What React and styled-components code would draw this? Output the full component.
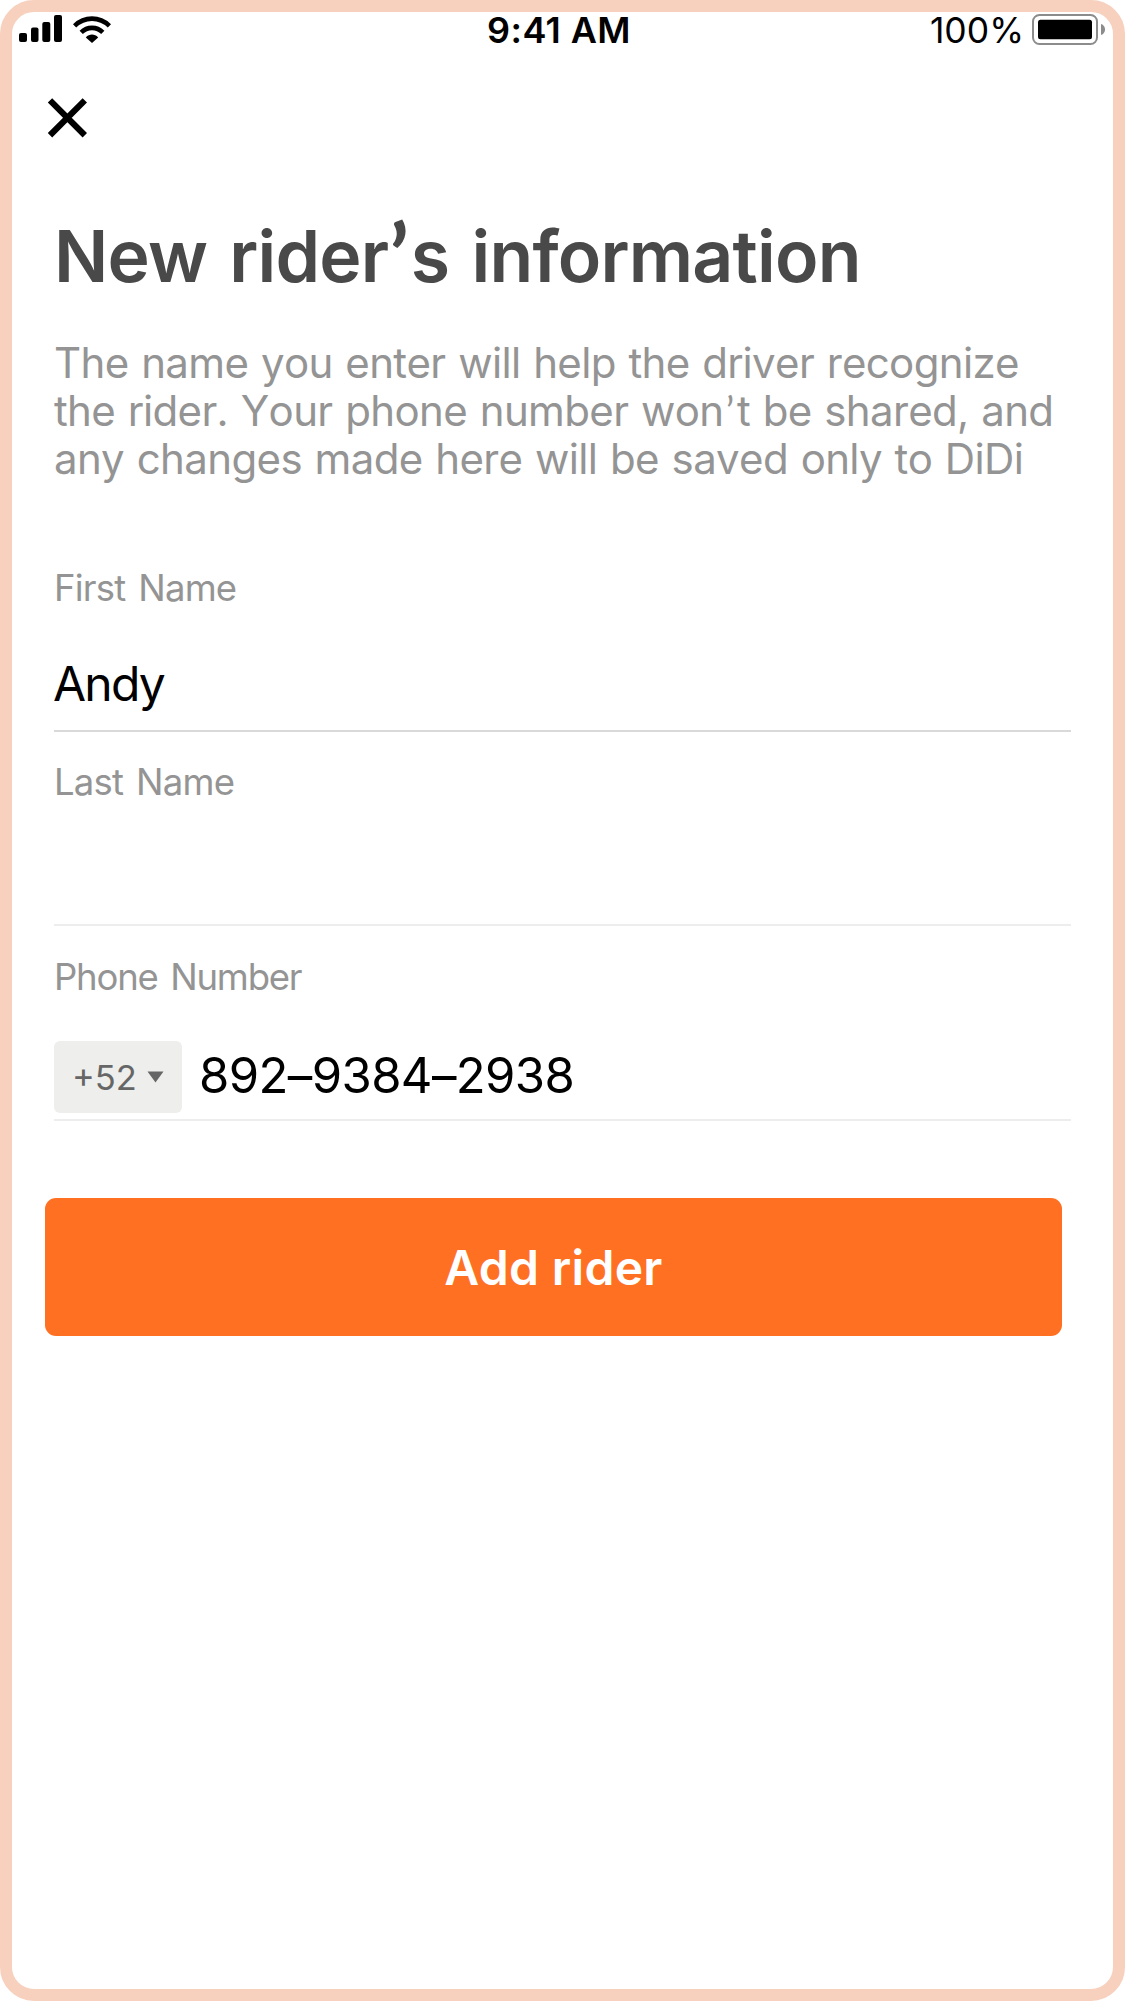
import { useState } from 'react'
import styled, { createGlobalStyle } from 'styled-components';

const GlobalStyle = createGlobalStyle`
  * {
    box-sizing: border-box;
  }
  body {
    margin: 0;
    background-color: white;
    font-family: 'Inter', 'Liberation Sans', sans-serif;
  }
`

const PhoneScreen = styled.div`
  width: 1125px;
  height: 2001px;
  background-color: white;
  border: solid 12px #f7d0be;
  border-radius: 34px;
`

const StatusBar = styled.header`
  display: grid;
  grid-template-columns: 1fr auto 1fr;
  align-items: center;
  height: 37px;
  padding: 0 7px;
  line-height: 37px;
  font-size: 35.5px;
  color: black;
  .signal {
    display: flex;
    align-items: center;
    gap: 10px;
    margin-bottom: 3px;
  }
  .time {
    margin-right: 7px;
    font-size: 36px;
    font-weight: 600;
    letter-spacing: 0.4px;
  }
  .battery {
    display: flex;
    align-items: center;
    justify-content: flex-end;
    gap: 8px;
  }
  .battery svg {
    margin-bottom: 2px;
  }
  svg {
    display: block;
  }
`

const CloseButton = styled.button`
  display: block;
  width: 44px;
  height: 44px;
  margin: 47px 0 0 34px;
  padding: 0;
  background: none;
  border: none;
  cursor: pointer;
`

const Content = styled.main`
  padding: 76px 43px 0 42px;
`

const Title = styled.h1`
  margin: 0;
  line-height: 80px;
  font-size: 71.5px;
  font-weight: 600;
  letter-spacing: -0.8px;
  word-spacing: 5px;
  color: #494949;
  white-space: nowrap;
`

const Apostrophe = styled.span`
  margin: 0 0.03em 0 0.01em;
  line-height: 0;
  font-family: 'Lato', sans-serif;
  font-size: 1.25em;
  font-weight: ${({ $bold }) => ($bold ? 700 : 400)};
  vertical-align: -0.08em;
`

const Description = styled.p`
  margin: 43px 0 0;
  line-height: 48px;
  font-size: 42px;
  font-kerning: none;
  letter-spacing: -0.64px;
  word-spacing: 1.5px;
  color: #949494;
  white-space: nowrap;
  ${Apostrophe} {
    margin: 0 0.08em 0 0.06em;
    font-size: 0.95em;
    vertical-align: 0.01em;
  }
`

const RiderForm = styled.form`
  display: flex;
  flex-direction: column;
  gap: 28px;
  width: 1017px;
  margin-top: 83px;
`

const Field = styled.div`
  display: flex;
  flex-direction: column;
  height: 166px;
  margin-top: ${({ $phone }) => ($phone ? '1px' : '0')};
  border-bottom: solid 2px ${({ $active }) => ($active ? '#d9d9d9' : '#ededed')};
  label {
    line-height: 44px;
    font-size: 36.5px;
    letter-spacing: ${({ $phone }) => ($phone ? '-1.2px' : '-0.8px')};
    word-spacing: 3.5px;
    color: #949494;
  }
`

const FieldValue = styled.div`
  display: flex;
  align-items: center;
  height: 72px;
  margin: ${({ $phone }) => ($phone ? '42px 0 0' : '37px 0 0 -1px')};
  font-size: 48px;
  letter-spacing: -1.8px;
  color: black;
  .number {
    padding-bottom: 4px;
    font-size: 49px;
    letter-spacing: -0.6px;
  }
`

const CountryCode = styled.div`
  display: flex;
  align-items: center;
  gap: 10px;
  width: 128px;
  height: 72px;
  margin-right: 17px;
  padding-left: 18px;
  font-size: 34.5px;
  letter-spacing: 0;
  color: #666666;
  background-color: #eeeeec;
  border-radius: 6px;
`

const SubmitButton = styled.button`
  width: 1017px;
  height: 138px;
  margin: 49px 0 0 -9px;
  font-family: inherit;
  font-size: 48px;
  font-weight: 600;
  letter-spacing: 0.3px;
  color: white;
  background-color: #ff7022;
  border: none;
  border-radius: 11px;
  cursor: pointer;
`

const SignalIcon = () => (
  <svg width='44' height='28' viewBox='0 0 44 28'>
    <rect x='0' y='18' width='8' height='9' rx='2' />
    <rect x='12' y='12.5' width='7.5' height='14.5' rx='2' />
    <rect x='23.3' y='7' width='8' height='20' rx='2' />
    <rect x='35' y='0' width='8' height='27' rx='2' />
  </svg>
)

const WifiIcon = () => (
  <svg width='38' height='28' viewBox='0 0 38 28'>
    <g fill='none' stroke='black' strokeWidth='4.6'>
      <path d='M1.6 10.8 C11.5 1.2 26.5 1.2 36.4 10.8' />
      <path d='M8.2 17.4 C14.2 11.4 23.8 11.4 29.8 17.4' />
    </g>
    <path d='M12.8 22.4 C16.4 18.6 21.6 18.6 25.2 22.4 L19 28 Z' />
  </svg>
)

const BatteryIcon = () => (
  <svg width='74' height='31' viewBox='0 0 74 31'>
    <rect x='1' y='1' width='64' height='29' rx='6.5' fill='none' stroke='#8c8c8c' strokeWidth='2' />
    <rect x='6' y='5.7' width='54' height='19.6' rx='2.5' />
    <path d='M69 10 C74.4 11.6 74.4 19.4 69 21 Z' fill='#8c8c8c' />
  </svg>
)

const CloseIcon = () => (
  <svg width='44' height='44' viewBox='0 0 44 44'>
    <path d='M4 4.4 L38.8 39.2 M38.8 4.4 L4 39.2' stroke='black' strokeWidth='6.2' />
  </svg>
)

const CaretIcon = () => (
  <svg width='17' height='12' viewBox='0 0 17 12'>
    <path d='M0.5 0.5 H16.5 L8.5 11.5 Z' fill='#666666' />
  </svg>
)

const App = () => {
  const [ riderInfo ] = useState({
    firstName: 'Andy',
    lastName: '',
    countryCode: '+52',
    phone: '892–9384–2938'
  });

  return (
    <PhoneScreen>
      <GlobalStyle />
      <StatusBar>
        <div className='signal'>
          <SignalIcon />
          <WifiIcon />
        </div>
        <div className='time'>9:41 AM</div>
        <div className='battery'>
          <span>100%</span>
          <BatteryIcon />
        </div>
      </StatusBar>
      <CloseButton type='button' aria-label='Close'>
        <CloseIcon />
      </CloseButton>
      <Content>
        <Title>New rider<Apostrophe $bold>’</Apostrophe>s information</Title>
        <Description>
          The name you enter will help the driver recognize<br />
          the rider. Your phone number won<Apostrophe>’</Apostrophe>t be shared, and<br />
          any changes made here will be saved only to DiDi
        </Description>
        <RiderForm onSubmit={(e) => e.preventDefault()}>
          <Field $active>
            <label>First Name</label>
            <FieldValue>{riderInfo.firstName}</FieldValue>
          </Field>
          <Field>
            <label>Last Name</label>
            <FieldValue>{riderInfo.lastName}</FieldValue>
          </Field>
          <Field $phone>
            <label>Phone Number</label>
            <FieldValue $phone>
              <CountryCode>
                <span>{riderInfo.countryCode}</span>
                <CaretIcon />
              </CountryCode>
              <span className='number'>{riderInfo.phone}</span>
            </FieldValue>
          </Field>
          <SubmitButton>Add rider</SubmitButton>
        </RiderForm>
      </Content>
    </PhoneScreen>
  )
}

export default App
